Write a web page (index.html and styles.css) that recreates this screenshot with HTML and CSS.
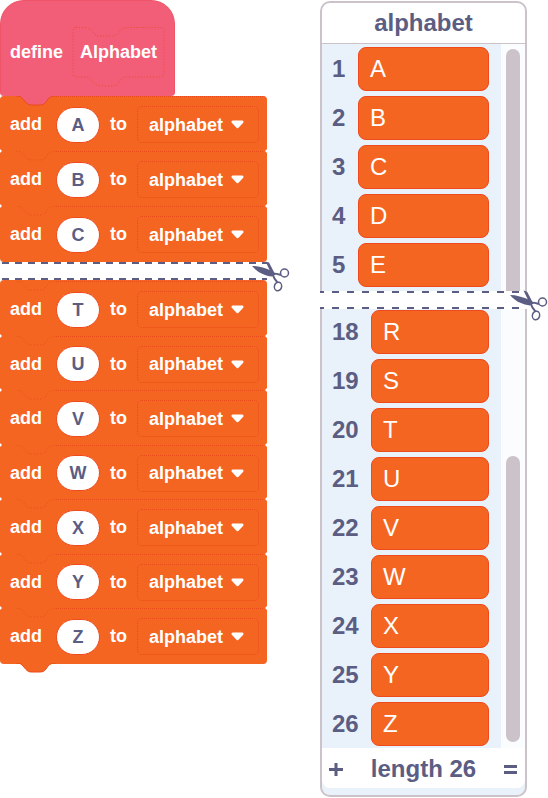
FILE: index.html
```html
<!DOCTYPE html>
<html lang="en">
<head>
<meta charset="utf-8">
<title>Alphabet list</title>
<link rel="stylesheet" href="styles.css">
</head>
<body>
<svg class="defs" width="0" height="0" aria-hidden="true">
  <symbol id="notch" viewBox="0 0 40 10">
    <path d="M0 0C4 0 5 1 7 3L10 6.500C12 8.500 13 9 16 9H23C27 9 28 8.500 30 6L32 3C34 1 36 0 40 0"/>
  </symbol>
  <symbol id="arrow" viewBox="0 0 13 9">
    <path d="M2 .5H11C12.700 .5 13 2 12 3L8 7.300Q6.500 9 5 7.300L1 3C0 2 .3 .5 2 .5Z" fill="#fff"/>
  </symbol>
  <symbol id="scissors" viewBox="0 0 40 32">
    <path d="M1 5C7 5 14 7 21 10L24.500 13.500L21 15.500C14 14.500 7 12 1 5Z" fill="#5b5d83"/>
    <path d="M14.500 0.500L18 1.500L24 13L21.500 15Z" fill="#5b5d83"/>
    <path d="M21 12.500Q26 12.500 30 14M21.500 13Q23 18 26.500 21.500" fill="none" stroke="#5b5d83" stroke-width="2"/>
    <ellipse cx="33.500" cy="12" rx="4" ry="4" fill="none" stroke="#5b5d83" stroke-width="1.500"/>
    <ellipse cx="27" cy="25.500" rx="3.600" ry="4.300" transform="rotate(15 27 25.500)" fill="none" stroke="#5b5d83" stroke-width="1.500"/>
  </symbol>
</svg>
<main class="page">
  <section class="script">
    <header class="define">
      <span>define</span>
      <span class="proto">
        <svg viewBox="0 0 93 61" aria-hidden="true"><path d="M4 1.500H12C16 1.500 18 3 20 5C24 9.500 25 10 29 10H39C43 10 45 9 48 5C50 3 52 1.500 56 1.500H89Q92 1.500 92 5V47Q92 51 88 51H56C52 51 50 52 48 55C45 59 43 60 39 60H29C25 60 24 59 20 55C18 52 16 51 12 51H4Q1 51 1 47V5Q1 1.500 4 1.500Z"/></svg>
        Alphabet
      </span>
    </header>
    <div class="stack first" data-items="A B C"></div>
    <div class="cut"><svg class="scissors" aria-hidden="true"><use href="#scissors"/></svg></div>
    <div class="stack last" data-items="T U V W X Y Z"></div>
  </section>

  <section class="monitor">
    <h1 class="title">alphabet</h1>
    <div class="pane upper">
      <ol class="items" data-start="1" data-items="A B C D E"></ol>
      <div class="lane"><div class="thumb"></div></div>
    </div>
    <div class="cut wide"><svg class="scissors" aria-hidden="true"><use href="#scissors"/></svg></div>
    <div class="pane lower">
      <ol class="items" data-start="18" data-items="R S T U V W X Y Z"></ol>
      <div class="lane"><div class="thumb"></div></div>
    </div>
    <footer class="foot">
      <button type="button" aria-label="Add item"><svg width="14" height="14" viewBox="0 0 14 14"><path d="M7 1V14M0 7.500H14" stroke="#5b5d83" stroke-width="3"/></svg></button>
      <span>length 26</span>
      <button type="button" aria-label="Resize"><svg width="14" height="14" viewBox="0 0 14 14"><path d="M0 4.500H13M0 10.500H13" stroke="#5b5d83" stroke-width="3"/></svg></button>
    </footer>
  </section>
</main>
<script src="blocks.js"></script>
</body>
</html>
```
FILE: styles.css
```css
* { box-sizing: border-box; }

body {
  margin: 0;
  background: #fff;
  font-family: "Liberation Sans", Arial, sans-serif;
  font-weight: 700;
  color: #5b5d83;
}

.defs { position: absolute; }

.page {
  display: grid;
  grid-template-columns: 267fr 207fr;
  gap: 53px;
  align-items: start;
  padding-right: 21px;
}

/* Code blocks */
.define {
  display: flex;
  align-items: center;
  gap: 9px;
  width: 175px;
  height: 96px;
  padding: 8px 9px 0;
  background: #f25e78;
  border: 1px solid #ee5566;
  border-bottom: 0;
  border-radius: 24px 24px 4px 4px;
  color: #fff;
  font-size: 18px;
  white-space: nowrap;
}

.proto {
  position: relative;
  padding: 0 8px;
}

.proto svg {
  position: absolute;
  left: 0;
  top: -16px;
  width: 93px;
  height: 61px;
  fill: none;
  stroke: #ee4a2c;
  stroke-dasharray: 1 2;
}

.stack {
  background: #f56522;
  border-radius: 4px;
}

.stack.first { padding-bottom: 1px; }
.stack.last { padding: 1px 0; }

.block {
  position: relative;
  display: flex;
  align-items: center;
  gap: 10px;
  height: 55px;
  padding: 2px 8px 0 10px;
  background: #f56522;
  border-radius: 5px;
  color: #fff;
  font-size: 18px;
}

.last .block:nth-child(even) { height: 54px; }

/* Joints between neighbouring blocks */
.block + .block::before,
.block + .block::after {
  content: "";
  position: absolute;
  top: -2px;
  border: 2px solid transparent;
}

.block + .block::before { left: 0; border-left-color: #fff; }
.block + .block::after { right: 0; border-right-color: #fff; }

.seam {
  position: absolute;
  top: 0;
  left: 56px;
  right: 4px;
  border-top: 1px dotted #ea4b1c;
}

.notch {
  position: absolute;
  top: 0;
  left: 16px;
  width: 40px;
  height: 10px;
  fill: none;
  stroke: #ea4b1c;
  stroke-dasharray: 1 2;
}

.first .block:first-child .notch {
  fill: #f25e78;
  stroke-dasharray: none;
}

.tab {
  position: absolute;
  top: 100%;
  left: 16px;
  width: 40px;
  height: 10px;
  fill: #f56522;
  stroke: #ea4b1c;
}

.letter {
  width: 44px;
  height: 36px;
  margin: 0 0 0 4px;
  padding: 1px 0 0;
  border: 1px solid #f04a1c;
  border-radius: 18px;
  background: #fff;
  color: #5b5d83;
  font: inherit;
  text-align: center;
}

.menu {
  position: relative;
  flex: 1;
  display: flex;
  align-items: center;
}

.menu select {
  appearance: none;
  width: 100%;
  height: 37px;
  padding: 0 11px;
  border: 1px dotted #ea4b1c;
  border-radius: 5px;
  background: transparent;
  color: #fff;
  font: inherit;
}

.menu svg {
  position: absolute;
  right: 15px;
  width: 13px;
  height: 9px;
  pointer-events: none;
}

/* Cut-out between the two halves */
.cut {
  --dashes: repeating-linear-gradient(90deg, transparent 0 2px, #5b5d83 2px 9px, transparent 9px 13px);
  position: relative;
  height: 18px;
  background:
    var(--dashes) top / 100% 2px no-repeat,
    var(--dashes) bottom / 100% 2px no-repeat;
}

.cut.wide {
  --dashes: repeating-linear-gradient(90deg, #5b5d83 0 4px, transparent 4px 12px, #5b5d83 12px 15px);
}

.scissors {
  position: absolute;
  top: -1px;
  right: -24px;
  width: 40px;
  height: 32px;
}

.wide .scissors { right: -22px; }

/* List monitor */
.title {
  display: flex;
  align-items: center;
  justify-content: center;
  height: 43px;
  margin: 1px 0 0;
  border: 2px solid #cbc2ca;
  border-bottom: 1px solid #cbc2ca;
  border-radius: 10px 10px 0 0;
  font-size: 24px;
}

.pane {
  display: flex;
  background: #e9f2fa;
  border: solid #cbc2ca;
  border-width: 0 2px;
}

.items {
  --number: 26px;
  flex: 1;
  display: grid;
  gap: 5px;
  margin: 0;
  padding: 3px 12px 4px 10px;
  list-style: none;
  font-size: 24px;
}

.lower .items {
  --number: 39px;
  padding-top: 1px;
  padding-bottom: 2px;
}

.items li {
  display: grid;
  grid-template-columns: var(--number) 1fr;
  align-items: center;
}

.value {
  height: 44px;
  padding: 0 11px;
  border: 1px solid #ef4a1c;
  border-radius: 8px;
  background: #f56522;
  color: #fff;
  font-weight: 400;
  line-height: 42px;
}

.lane {
  display: flex;
  width: 24px;
  padding: 5px 5px 0;
  background: #fafcfe;
}

.lower .lane {
  align-items: flex-end;
  padding: 0 5px 6px;
}

.thumb {
  width: 14px;
  border-radius: 7px 7px 0 0;
  background: #cbc2ca;
}

.lower .thumb {
  height: 66%;
  border-radius: 7px;
}

.foot {
  display: flex;
  align-items: center;
  justify-content: space-between;
  height: 49px;
  padding: 0 7px 6px;
  border: 2px solid #cbc2ca;
  border-top: 0;
  border-radius: 0 0 10px 10px;
  box-shadow: inset 0 -7px #e9f2fa;
  font-size: 24px;
}

.foot button {
  display: flex;
  padding: 0;
  border: 0;
  background: none;
}
```
FILE: blocks.js
```js
const notch = (name) => `<svg class="${name}" aria-hidden="true"><use href="#notch"/></svg>`;

document.querySelectorAll(".stack").forEach((stack) => {
  const letters = stack.dataset.items.split(" ");
  stack.innerHTML = letters.map((letter) => `
    <div class="block">
      <div class="seam"></div>
      ${notch("notch")}
      <label for="add-${letter}">add</label>
      <input class="letter" id="add-${letter}" value="${letter}">
      <label for="list-${letter}">to</label>
      <div class="menu">
        <select id="list-${letter}"><option>alphabet</option></select>
        <svg aria-hidden="true"><use href="#arrow"/></svg>
      </div>
      ${letter === "Z" ? notch("tab") : ""}
    </div>`).join("");
});

document.querySelectorAll(".items").forEach((list) => {
  const start = Number(list.dataset.start);
  list.innerHTML = list.dataset.items.split(" ").map((letter, i) =>
    `<li><span>${start + i}</span><span class="value">${letter}</span></li>`).join("");
});
```
